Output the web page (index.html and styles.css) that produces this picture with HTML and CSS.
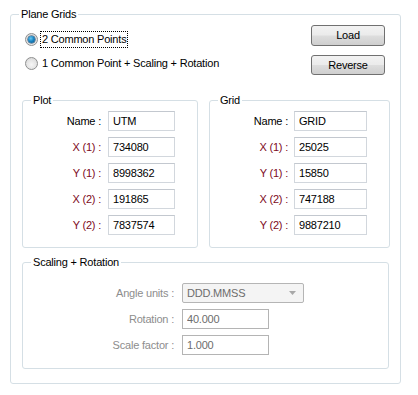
FILE: index.html
```html
<!DOCTYPE html>
<html lang="en">

<head>
    <meta charset="UTF-8">
    <title>Plane Grids</title>
    <link rel="stylesheet" href="styles.css">
</head>

<body>
    <div class="group outer">
        <div class="group-title">Plane Grids</div>

        <!-- mode + buttons -->
        <div class="top">
            <div class="options">
                <label class="option">
                    <span class="radio checked"></span>
                    <span class="option-text focus">2 Common Points</span>
                </label>
                <label class="option">
                    <span class="radio"></span>
                    <span class="option-text">1 Common Point + Scaling + Rotation</span>
                </label>
            </div>
            <div class="actions">
                <button class="btn">Load</button>
                <button class="btn">Reverse</button>
            </div>
        </div>

        <!-- plot / grid points -->
        <div class="pair">
            <div class="group plot">
                <div class="group-title">Plot</div>
                <div class="fields">
                    <span class="lbl">Name :</span><input class="txt" value="UTM">
                    <span class="lbl coord">X (1) :</span><input class="txt" value="734080">
                    <span class="lbl coord">Y (1) :</span><input class="txt" value="8998362">
                    <span class="lbl coord">X (2) :</span><input class="txt" value="191865">
                    <span class="lbl coord">Y (2) :</span><input class="txt" value="7837574">
                </div>
            </div>
            <div class="group grid">
                <div class="group-title">Grid</div>
                <div class="fields">
                    <span class="lbl">Name :</span><input class="txt" value="GRID">
                    <span class="lbl coord">X (1) :</span><input class="txt" value="25025">
                    <span class="lbl coord">Y (1) :</span><input class="txt" value="15850">
                    <span class="lbl coord">X (2) :</span><input class="txt" value="747188">
                    <span class="lbl coord">Y (2) :</span><input class="txt" value="9887210">
                </div>
            </div>
        </div>

        <!-- scaling (disabled) -->
        <div class="group scaling">
            <div class="group-title">Scaling + Rotation</div>
            <div class="fields">
                <span class="lbl off">Angle units :</span>
                <div class="select">
                    <span>DDD.MMSS</span>
                    <svg width="7" height="4" viewBox="0 0 7 4"><path d="M0 0h7L3.5 4z" fill="#a8a8a8"/></svg>
                </div>
                <span class="lbl off">Rotation :</span><input class="txt off" value="40.000" disabled>
                <span class="lbl off">Scale factor :</span><input class="txt off" value="1.000" disabled>
            </div>
        </div>
    </div>
</body>

</html>
```

FILE: styles.css
```css
/* base */
body {
    margin: 0;
    background-color: #fff;
    font-family: "Liberation Sans", Arial, sans-serif;
    font-size: 11px;
    letter-spacing: -0.2px;
    color: #000;
}

/* group boxes */
.group {
    box-sizing: border-box;
    border: 1px solid #d5dfe5;
    border-radius: 3px;
}

.group-title {
    display: block;
    width: max-content;
    height: 13px;
    line-height: 13px;
    margin: -7px 0 0 8px;
    padding: 0 2px;
    background-color: #fff;
}

.outer {
    width: 391px;
    height: 370px;
    margin: 14px 0 0 10px;
}

/* top row */
.top {
    display: flex;
    justify-content: space-between;
    height: 54px;
}

.options {
    padding: 6px 0 0 14px;
}

.option {
    display: flex;
    align-items: center;
    gap: 3px;
    height: 24px;
}

.radio {
    box-sizing: border-box;
    width: 13px;
    height: 13px;
    border: 1px solid #8e8f8f;
    border-radius: 50%;
    background: radial-gradient(circle at 50% 60%, #f6f6f6 0%, #e2e2e2 60%, #d0d0d0 100%);
    display: flex;
    align-items: center;
    justify-content: center;
}

.radio.checked::after {
    content: "";
    width: 7px;
    height: 7px;
    border-radius: 50%;
    background: radial-gradient(circle at 40% 35%, #6cc8f0 0%, #1b86c4 45%, #0a4f80 100%);
    box-shadow: 0 0 0 0.5px #173f63;
}

.option-text {
    line-height: 15px;
    padding: 0 1px;
}

.option-text.focus {
    outline: 1px dotted #000;
}

.actions {
    display: flex;
    flex-direction: column;
    gap: 9px;
    padding-top: 4px;
    margin-right: 15px;
}

.btn {
    box-sizing: border-box;
    width: 74px;
    height: 21px;
    padding: 0;
    border: 1px solid #707070;
    border-radius: 3px;
    background: linear-gradient(#f2f2f2 0%, #ebebeb 48%, #dddddd 52%, #cfcfcf 100%);
    font-family: inherit;
    font-size: 11px;
    letter-spacing: inherit;
    color: #000;
}

/* plot / grid */
.pair {
    display: flex;
    gap: 11px;
    margin: 25px 0 0 11px;
}

.plot {
    width: 176px;
    height: 148px;
}

.grid {
    width: 181px;
    height: 148px;
}

.fields {
    display: grid;
    grid-template-columns: 78px 67px;
    column-gap: 7px;
    row-gap: 6px;
    margin-top: 4px;
    align-items: center;
}

.grid .fields {
    grid-template-columns: 78px 73px;
    column-gap: 6px;
}

.lbl {
    justify-self: end;
    white-space: pre;
}

.lbl.coord {
    color: #7d0a22;
}

.lbl.off {
    color: #8d8d8d;
}

.txt {
    box-sizing: border-box;
    width: 100%;
    height: 20px;
    margin: 0;
    padding: 0 4px;
    border: 1px solid #d2d7dd;
    border-top-color: #c3c8cf;
    background-color: #fff;
    font-family: inherit;
    font-size: 11px;
    letter-spacing: inherit;
    color: #000;
}

.txt.off {
    width: 87px;
    border-color: #b4b4b4;
    color: #6d6d6d;
}

/* scaling */
.scaling {
    width: 367px;
    height: 107px;
    margin: 14px 0 0 11px;
}

.scaling .fields {
    grid-template-columns: 151px auto;
    column-gap: 8px;
    margin-top: 14px;
    justify-items: start;
}

.scaling .lbl {
    justify-self: end;
}

.select {
    box-sizing: border-box;
    display: flex;
    align-items: center;
    justify-content: space-between;
    width: 122px;
    height: 20px;
    padding: 0 7px 0 4px;
    border: 1px solid #b5b5b5;
    border-radius: 2px;
    background-color: #f4f4f4;
    color: #6d6d6d;
}
```
